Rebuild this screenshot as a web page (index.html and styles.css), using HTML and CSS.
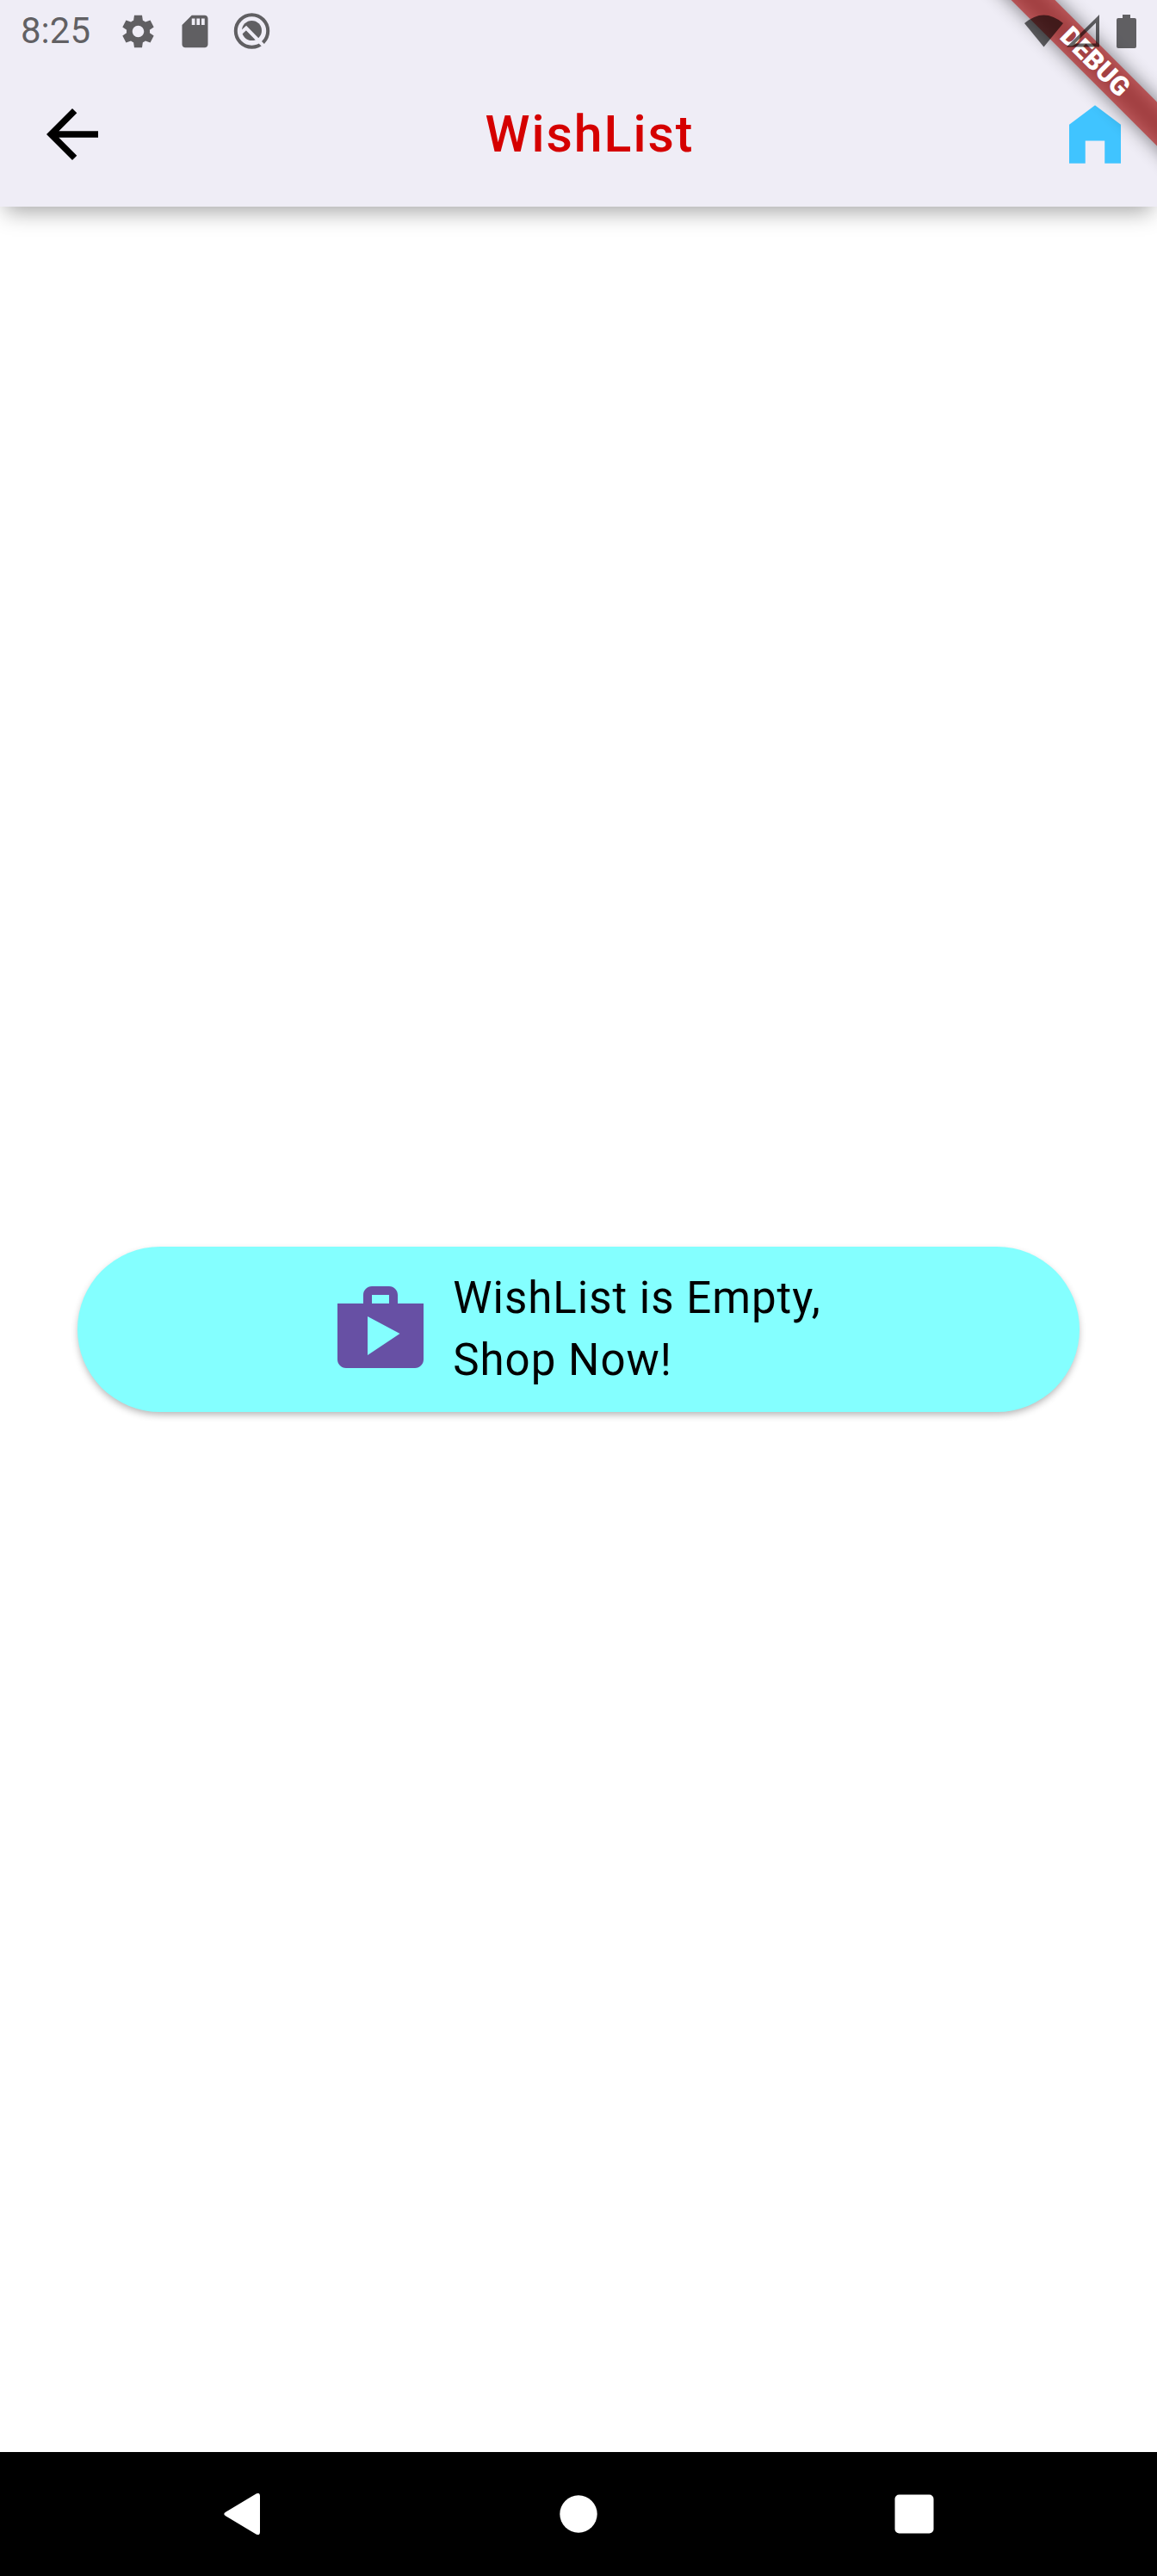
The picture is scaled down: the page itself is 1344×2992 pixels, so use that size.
FILE: index.html
```html
<!DOCTYPE html>
<html lang="en">
<head>
<meta charset="utf-8">
<meta name="viewport" content="width=device-width, initial-scale=1">
<title>WishList</title>
<link rel="stylesheet" href="styles.css">
</head>
<body>
<div class="screen">
  <header class="top">
    <div class="status">
      <span class="time">8:25</span>
      <div class="status-group">
        <svg class="status-icon" viewBox="0 0 24 24" aria-hidden="true"><path d="M19.14 12.94c.04-.3.06-.61.06-.94 0-.32-.02-.64-.07-.94l2.56-1.78-2.2-4.2-3 1.04c-.49-.38-1.03-.7-1.62-.94L14.4 2H9.6l-.47 3.18c-.59.24-1.12.57-1.62.94l-3-1.04-2.2 4.2 2.56 1.78c-.05.3-.09.63-.09.94s.02.64.07.94L2.3 14.72l2.2 4.2 3-1.04c.5.38 1.03.7 1.62.94L9.6 22h4.8l.47-3.18c.59-.24 1.13-.56 1.62-.94l3 1.04 2.2-4.2-2.55-1.78zM12 15.6c-1.98 0-3.6-1.62-3.6-3.6s1.62-3.6 3.6-3.6 3.6 1.62 3.6 3.6-1.62 3.6-3.6 3.6z"/></svg>
        <svg class="status-icon" viewBox="0 0 24 24" aria-hidden="true"><path d="M18 2h-8L4 8v12c0 1.1.9 2 2 2h12c1.1 0 2-.9 2-2V4c0-1.1-.9-2-2-2zm-6 6h-2V4h2v4zm3 0h-2V4h2v4zm3 0h-2V4h2v4z"/></svg>
        <svg class="status-icon" viewBox="0 0 45 45" aria-hidden="true"><circle class="ring" cx="22.5" cy="22" r="18.7"/><circle cx="22.5" cy="21.5" r="11.5"/><path class="cut" d="M9 25l7-6.500L36 39"/></svg>
      </div>
      <div class="status-group status-end">
        <svg class="wifi" viewBox="0 0 45 38" aria-hidden="true"><path d="M0 10Q22.5-9 45 10L22.5 37.500z"/></svg>
        <svg class="signal" viewBox="0 0 38 38" aria-hidden="true"><path fill-rule="evenodd" d="M38 0V37.500H0zM34 9.500L9.500 33.500H34z"/></svg>
        <svg class="battery" viewBox="0 0 23 39" aria-hidden="true"><path d="M7 0h9v4h5q2 0 2 2v31q0 2-2 2H2q-2 0-2-2V6q0-2 2-2h5z"/></svg>
      </div>
    </div>
    <div class="appbar">
      <button class="icon-button back" type="button" aria-label="Back"><svg viewBox="0 0 24 24" aria-hidden="true"><path d="M20 11H7.83l5.59-5.59L12 4l-8 8 8 8 1.41-1.41L7.83 13H20v-2z"/></svg></button>
      <h1 class="title">WishList</h1>
      <button class="icon-button home" type="button" aria-label="Home"><svg viewBox="0 0 24 24" aria-hidden="true"><path d="M4 9v12h5v-7h6v7h5V9l-8-6z"/></svg></button>
    </div>
    <div class="corner"><div class="ribbon"><span class="ribbon-text">DEBUG</span></div></div>
  </header>

  <main class="content">
    <button class="shop" type="button">
      <svg class="shop-icon" viewBox="0 0 24 24" aria-hidden="true"><path d="M16 6V4c0-1.11-.89-2-2-2h-4c-1.11 0-2 .89-2 2v2H2v13c0 1.11.89 2 2 2h16c1.11 0 2-.89 2-2V6h-6zm-6-2h4v2h-4V4zM9 18V9l7.5 4L9 18z"/></svg>
      <span class="shop-text">WishList is Empty,<br>Shop Now!</span>
    </button>
  </main>

  <nav class="navbar" aria-label="System">
    <button class="nav-button" type="button" aria-label="Back"><svg viewBox="0 0 48 48" aria-hidden="true"><path d="M4.500 21.500L39.500 .5Q44-1.500 44 3V45Q44 49.500 39.500 47.500L4.500 26.500Q0 24 4.500 21.500z"/></svg></button>
    <button class="nav-button" type="button" aria-label="Home"><svg viewBox="0 0 48 48" aria-hidden="true"><circle cx="24" cy="24" r="21.7"/></svg></button>
    <button class="nav-button" type="button" aria-label="Recent apps"><svg viewBox="0 0 48 48" aria-hidden="true"><rect x="1.500" y="1.500" width="45" height="45" rx="5"/></svg></button>
  </nav>
</div>
</body>
</html>
```
FILE: styles.css
```css
* {
  box-sizing: border-box;
}

body {
  margin: 0;
  background: #fff;
  color: #000;
  font-family: Roboto, "Liberation Sans", sans-serif;
}

button {
  margin: 0;
  padding: 0;
  border: 0;
  background: none;
  color: inherit;
  font: inherit;
  cursor: pointer;
}

svg {
  display: block;
  fill: currentColor;
}

.screen {
  display: flex;
  flex-direction: column;
  min-height: 100vh;
}

.top {
  position: relative;
  background: #efedf6;
  box-shadow: 0 12px 24px -6px rgba(0, 0, 0, 0.35);
}

/* System status bar */
.status {
  position: relative;
  z-index: 2;
  display: flex;
  align-items: center;
  height: 72px;
  padding: 0 24px;
  color: rgba(0, 0, 0, 0.6);
}

.time {
  width: 114px;
  font-size: 42px;
  line-height: 48px;
}

.status-group {
  display: flex;
  align-items: center;
  gap: 21px;
}

.status-end {
  gap: 4px;
  margin-left: auto;
}

.status-icon {
  width: 45px;
  height: 45px;
}

.ring {
  fill: none;
  stroke: currentColor;
  stroke-width: 4;
}

.cut {
  fill: none;
  stroke: #efedf6;
  stroke-width: 4;
}

.wifi {
  width: 45px;
  height: 38px;
}

.signal {
  width: 38px;
  height: 38px;
}

.battery {
  width: 23px;
  height: 39px;
  margin-left: 16px;
}

/* App bar */
.appbar {
  display: flex;
  align-items: center;
  justify-content: space-between;
  height: 168px;
  padding: 0 27px 0 39px;
}

.back {
  width: 104px;
}

.icon-button svg {
  width: 90px;
  height: 90px;
}

.home {
  color: #40c4ff;
}

.title {
  margin: 0;
  color: #d50000;
  font-size: 59px;
  font-weight: 500;
  line-height: 72px;
  letter-spacing: 2px;
}

/* Diagonal corner ribbon */
.corner {
  position: absolute;
  top: 0;
  right: 0;
  z-index: 1;
  width: 240px;
  height: 240px;
  overflow: hidden;
  pointer-events: none;
}

.ribbon {
  position: absolute;
  top: 54px;
  right: -108px;
  width: 360px;
  height: 36px;
  color: #fff;
  text-align: center;
  transform: rotate(45deg);
}

.ribbon::before,
.ribbon::after {
  content: "";
  position: absolute;
  inset: 0;
  z-index: -2;
  background: rgba(0, 0, 0, 0.5);
  filter: blur(11px);
}

.ribbon::after {
  z-index: -1;
  background: rgba(183, 28, 28, 0.63);
  filter: none;
}

.ribbon-text {
  display: block;
  font-size: 31px;
  font-weight: 900;
  line-height: 36px;
}

/* Empty state */
.content {
  display: flex;
  flex: 1;
  align-items: center;
  padding: 0 90px;
}

.shop {
  display: flex;
  flex: 1;
  align-items: center;
  justify-content: center;
  gap: 24px;
  padding: 24px;
  border-radius: 96px;
  background: #84ffff;
  box-shadow: 0 4px 9px -1px rgba(0, 0, 0, 0.3);
}

.shop-icon {
  width: 120px;
  height: 120px;
  color: #6750a4;
}

.shop-text {
  padding-right: 8px;
  font-size: 51px;
  line-height: 72px;
  letter-spacing: 1px;
  text-align: left;
}

/* System navigation bar */
.navbar {
  display: flex;
  align-items: center;
  justify-content: space-around;
  height: 144px;
  padding: 0 87px;
  background: #000;
  color: #fff;
}

.nav-button svg {
  width: 48px;
  height: 48px;
}
```
